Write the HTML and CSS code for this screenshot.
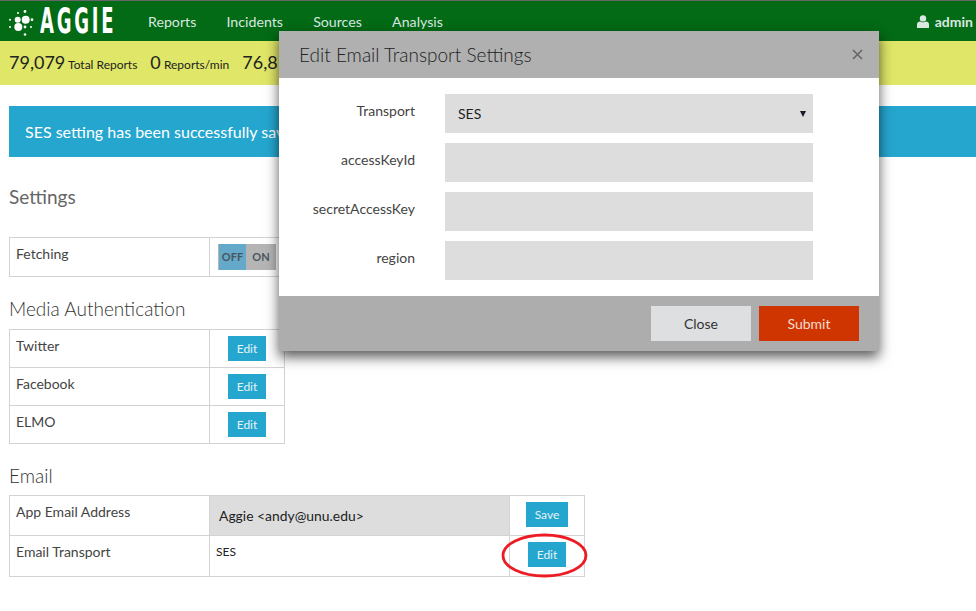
FILE: index.html
```html
<!DOCTYPE html>
<html lang="en">
<head>
    <meta charset="UTF-8">
    <meta name="viewport" content="width=device-width, initial-scale=1.0">
    <title>Aggie Settings</title>
    <link rel="stylesheet" href="styles.css">
</head>
<body>
    <header class="navbar">
        <div class="brand">
            <svg class="brand-mark" width="32" height="32" viewBox="8 5 32 32">
                <circle cx="25" cy="11.5" r="1.4" fill="#fff"/>
                <circle cx="25.7" cy="19.7" r="4" fill="#fff"/>
                <circle cx="18.3" cy="27" r="4" fill="#fff"/>
                <circle cx="17.7" cy="19.7" r="3" fill="#fff"/>
                <circle cx="32" cy="19.7" r="1.4" fill="#fff"/>
                <circle cx="25" cy="27" r="1.4" fill="#fff"/>
                <circle cx="31" cy="27" r="1" fill="#fff"/>
                <circle cx="25" cy="34.5" r="1.3" fill="#fff"/>
                <circle cx="10" cy="19.7" r="1" fill="#fff"/>
                <circle cx="10" cy="27" r="1" fill="#fff"/>
                <circle cx="18" cy="13" r="1" fill="#fff"/>
            </svg>
            <span class="brand-name">AGGIE</span>
        </div>
        <nav class="nav-links">
            <a href="#">Reports</a>
            <a href="#">Incidents</a>
            <a href="#">Sources</a>
            <a href="#">Analysis</a>
        </nav>
        <div class="user">
            <svg width="12" height="13" viewBox="0 0 12 13">
                <circle cx="6" cy="3.4" r="3.2" fill="#d9e8e0"/>
                <path d="M0 13 V9.5 C0 7.5 1.6 6.6 3 6.6 C4 7.5 8 7.5 9 6.6 C10.4 6.6 12 7.5 12 9.5 V13 Z" fill="#d9e8e0"/>
            </svg>
            <span>admin</span>
        </div>
    </header>

    <div class="stats">
        <span class="stat"><b>79,079</b> Total Reports</span>
        <span class="stat"><b>0</b> Reports/min</span>
        <span class="stat"><b>76,8</b></span>
    </div>

    <main class="content">
        <div class="alert">SES setting has been successfully saved</div>

        <h1>Settings</h1>
        <table class="settings-table first-table">
            <tr class="row-fetch">
                <td class="label-cell">Fetching</td>
                <td class="action-cell">
                    <div class="toggle"><span class="toggle-off">OFF</span><span class="toggle-on">ON</span></div>
                </td>
            </tr>
        </table>

        <h2>Media Authentication</h2>
        <table class="settings-table">
            <tr><td class="label-cell">Twitter</td><td class="action-cell center"><button class="btn">Edit</button></td></tr>
            <tr><td class="label-cell">Facebook</td><td class="action-cell center"><button class="btn">Edit</button></td></tr>
            <tr><td class="label-cell">ELMO</td><td class="action-cell center"><button class="btn">Edit</button></td></tr>
        </table>

        <h2 class="email-title">Email</h2>
        <table class="settings-table email-table">
            <tr class="row-address">
                <td class="label-cell">App Email Address</td>
                <td class="value-cell filled">Aggie &lt;andy@unu.edu&gt;</td>
                <td class="action-cell center"><button class="btn btn-save">Save</button></td>
            </tr>
            <tr class="row-transport">
                <td class="label-cell">Email Transport</td>
                <td class="value-cell small">SES</td>
                <td class="action-cell center"><button class="btn">Edit</button></td>
            </tr>
        </table>
    </main>

    <!-- hand drawn marker around the edit button -->
    <svg class="marker" width="87" height="45" viewBox="0 0 87 45">
        <ellipse cx="43.5" cy="22.5" rx="41.5" ry="20.5" fill="none" stroke="#ed1c24" stroke-width="2.8"/>
    </svg>

    <div class="modal">
        <div class="modal-header">
            <span class="modal-title">Edit Email Transport Settings</span>
            <svg class="modal-x" width="11" height="11" viewBox="0 0 11 11">
                <path d="M1 1 L10 10 M10 1 L1 10" stroke="#666" stroke-width="1.6"/>
            </svg>
        </div>
        <div class="modal-body">
            <div class="form-row">
                <label>Transport</label>
                <div class="field select-field"><span>SES</span><i class="caret"></i></div>
            </div>
            <div class="form-row"><label>accessKeyId</label><div class="field"></div></div>
            <div class="form-row"><label>secretAccessKey</label><div class="field"></div></div>
            <div class="form-row"><label>region</label><div class="field"></div></div>
        </div>
        <div class="modal-footer">
            <button class="modal-btn btn-close">Close</button>
            <button class="modal-btn btn-submit">Submit</button>
        </div>
    </div>
</body>
</html>
```

FILE: styles.css
```css
body {
    margin: 0;
    background-color: #fff;
    color: #333;
    font-family: Lato, "Open Sans", sans-serif;
    font-size: 14px;
    overflow: hidden;
}

.navbar {
    display: flex;
    align-items: center;
    height: 40px;
    padding-right: 3px;
    background-color: #036a15;
    border-top: 1px solid #666;
    color: #d9e8e0;
}

.brand {
    display: flex;
    align-items: center;
    width: 148px;
    padding-left: 8px;
    box-sizing: border-box;
}

.brand-mark {
    flex: none;
}

.brand-name {
    color: #fff;
    font-family: "DejaVu Sans", sans-serif;
    font-size: 36px;
    font-weight: 700;
    line-height: 40px;
    display: inline-block;
    transform: scaleX(0.5);
    transform-origin: left center;
    letter-spacing: 5.5px;
}

.nav-links {
    display: flex;
    gap: 30.2px;
}

.nav-links a {
    color: #d9e8e0;
    text-decoration: none;
    font-size: 14.2px;
}

.user {
    display: flex;
    align-items: center;
    gap: 6px;
    margin-left: auto;
    font-weight: 700;
    font-size: 14px;
}

.stats {
    display: flex;
    align-items: center;
    gap: 13px;
    height: 41px;
    padding: 0 0 3px 9px;
    background-color: #dfe668;
    color: #222;
    font-size: 12px;
}

.stat b {
    font-size: 18px;
    font-weight: 400;
}

.content {
    padding: 21px 0 0 9px;
}

.alert {
    height: 51px;
    line-height: 52px;
    padding-left: 16px;
    background-color: #25a6cf;
    color: #fff;
    font-size: 16px;
}

h1 {
    margin: 28px 0 28px;
    color: #666;
    font-size: 19px;
    font-weight: 400;
    line-height: 24px;
}

h2 {
    margin: 20px 0 9px;
    color: #333;
    font-size: 19px;
    font-weight: 300;
    line-height: 23px;
}

.email-title {
    margin-bottom: 8px;
}

.settings-table {
    border-collapse: collapse;
    width: 275px;
    table-layout: fixed;
}

.settings-table td {
    box-sizing: border-box;
    border: 1px solid #d3d3d3;
    height: 38px;
    padding: 0;
    vertical-align: top;
}

.first-table .row-fetch td {
    height: 39px;
}

.label-cell {
    width: 200px;
    padding: 7px 0 0 6px !important;
    color: #444;
}

.action-cell {
    width: 75px;
}

.center {
    text-align: center;
}

.btn {
    display: inline-block;
    height: 25px;
    width: 38px;
    margin-top: 6px;
    padding: 0;
    border: 0;
    background-color: #25a6cf;
    color: #e4f3f8;
    font-family: Lato, sans-serif;
    font-size: 12px;
}

.btn-save {
    width: 42px;
}

.toggle {
    display: flex;
    width: 58px;
    height: 26px;
    margin: 6px 0 0 8px;
    background-color: #b5b5b5;
    font-size: 11px;
    font-weight: 700;
    line-height: 26px;
    text-align: center;
    color: #4a5560;
}

.toggle-off {
    width: 27px;
    margin-left: 1px;
    background-color: #64a9c9;
}

.toggle-on {
    flex: 1;
}

.email-table {
    width: 575px;
}

.email-table .value-cell {
    width: 300px;
}

.row-address td {
    height: 40px;
}

.row-transport td {
    height: 41px;
}

.filled {
    padding: 11px 0 0 9px !important;
    background-color: #ddd;
    color: #222;
    font-size: 13.9px;
}

.small {
    padding: 8px 0 0 6px !important;
    font-size: 12px;
    color: #222;
}

.marker {
    position: absolute;
    left: 501px;
    top: 533px;
}

.modal {
    position: absolute;
    left: 279px;
    top: 31px;
    width: 600px;
    box-shadow: 0 6px 12px rgba(0, 0, 0, 0.65);
}

.modal-header {
    display: flex;
    align-items: center;
    justify-content: space-between;
    height: 47px;
    padding: 0 16px 0 20px;
    background-color: #b0b0b0;
}

.modal-title {
    color: #222;
    font-size: 19px;
    font-weight: 300;
}

.modal-body {
    display: flex;
    flex-direction: column;
    gap: 10px;
    height: 186px;
    padding: 16px 0;
    background-color: #fff;
}

.form-row {
    display: flex;
    height: 39px;
}

.form-row label {
    width: 136px;
    padding-top: 8px;
    text-align: right;
    color: #444;
}

.field {
    width: 368px;
    margin-left: 30px;
    background-color: #ddd;
}

.select-field {
    display: flex;
    align-items: center;
    justify-content: space-between;
    padding: 0 7px 0 13px;
    box-sizing: border-box;
    color: #222;
}

.caret {
    width: 0;
    height: 0;
    border-left: 3px solid transparent;
    border-right: 3px solid transparent;
    border-top: 6px solid #1a1a2a;
}

.modal-footer {
    display: flex;
    justify-content: flex-end;
    align-items: center;
    gap: 8px;
    height: 55px;
    padding-right: 20px;
    background-color: #adadad;
}

.modal-btn {
    width: 100px;
    height: 35px;
    padding: 0;
    border: 0;
    font-family: Lato, sans-serif;
    font-size: 14px;
}

.btn-close {
    background-color: #dddfe1;
    color: #333;
}

.btn-submit {
    background-color: #cf3500;
    color: #f5dcd2;
}
```
